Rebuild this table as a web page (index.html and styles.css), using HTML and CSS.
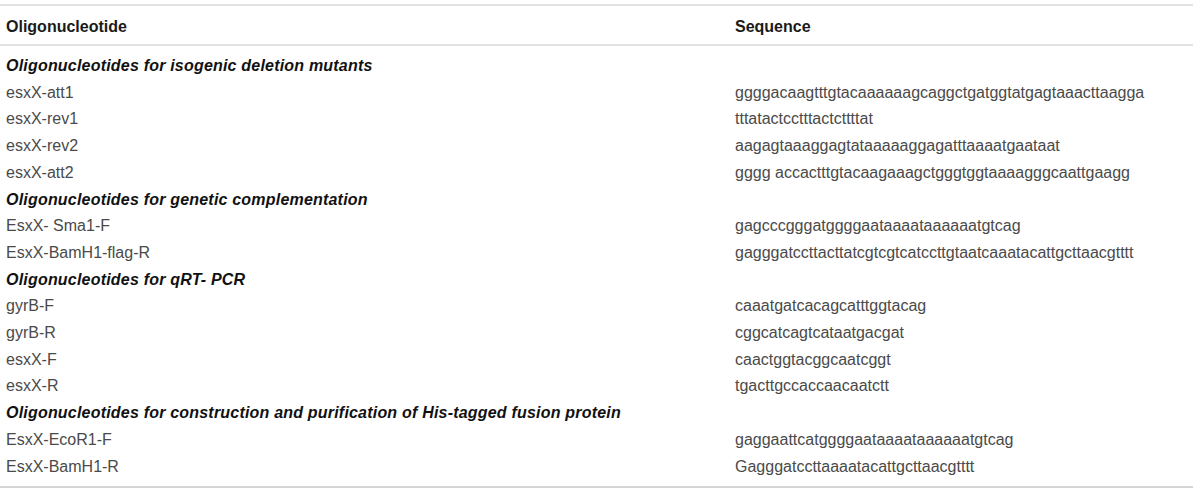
FILE: index.html
```html
<!DOCTYPE html>
<html>
<head>
<meta charset="utf-8">
<link rel="stylesheet" href="styles.css">
</head>
<body>
<div class="wrap">
<table class="oligo">
<thead>
<tr><th class="c1">Oligonucleotide</th><th class="c2">Sequence</th></tr>
</thead>
<tbody>
<tr class="grp"><td colspan="2">Oligonucleotides for isogenic deletion mutants</td></tr>
<tr><td>esxX-att1</td><td>ggggacaagtttgtacaaaaaagcaggctgatggtatgagtaaacttaagga</td></tr>
<tr><td>esxX-rev1</td><td>tttatactcctttactcttttat</td></tr>
<tr><td>esxX-rev2</td><td>aagagtaaaggagtataaaaaggagatttaaaatgaataat</td></tr>
<tr><td>esxX-att2</td><td>gggg accactttgtacaagaaagctgggtggtaaaagggcaattgaagg</td></tr>
<tr class="grp"><td colspan="2">Oligonucleotides for genetic complementation</td></tr>
<tr><td>EsxX- Sma1-F</td><td>gagcccgggatggggaataaaataaaaaatgtcag</td></tr>
<tr><td>EsxX-BamH1-flag-R</td><td>gagggatccttacttatcgtcgtcatccttgtaatcaaatacattgcttaacgtttt</td></tr>
<tr class="grp"><td colspan="2">Oligonucleotides for qRT- PCR</td></tr>
<tr><td>gyrB-F</td><td>caaatgatcacagcatttggtacag</td></tr>
<tr><td>gyrB-R</td><td>cggcatcagtcataatgacgat</td></tr>
<tr><td>esxX-F</td><td>caactggtacggcaatcggt</td></tr>
<tr><td>esxX-R</td><td>tgacttgccaccaacaatctt</td></tr>
<tr class="grp"><td colspan="2">Oligonucleotides for construction and purification of His-tagged fusion protein</td></tr>
<tr><td>EsxX-EcoR1-F</td><td>gaggaattcatggggaataaaataaaaaatgtcag</td></tr>
<tr><td>EsxX-BamH1-R</td><td>Gagggatccttaaaatacattgcttaacgtttt</td></tr>
</tbody>
</table>
</div>
</body>
</html>
```
FILE: styles.css
```css
html, body {
  margin: 0;
  padding: 0;
  background: #ffffff;
}
.wrap {
  padding-top: 4px;
}
.oligo {
  width: 1193px;
  border-collapse: collapse;
  font-family: "Liberation Sans", Arial, sans-serif;
  font-size: 16px;
  color: #4a4a4a;
}
.oligo th {
  text-align: left;
  font-weight: bold;
  color: #1a1a1a;
  height: 34px;
  padding: 4px 6px 0;
  border-top: 2px solid #e2e2e2;
  border-bottom: 2px solid #e2e2e2;
}
.oligo th.c1 {
  width: 717px;
}
.oligo td {
  padding: 0 6px;
  line-height: 26.7px;
  white-space: nowrap;
}
.oligo tbody tr:first-child td {
  padding-top: 7px;
}
.oligo tbody tr:last-child td {
  padding-bottom: 6px;
  border-bottom: 2px solid #d6d6d6;
}
.oligo tr.grp td {
  font-weight: bold;
  font-style: italic;
  color: #111111;
  letter-spacing: 0.2px;
}
```
